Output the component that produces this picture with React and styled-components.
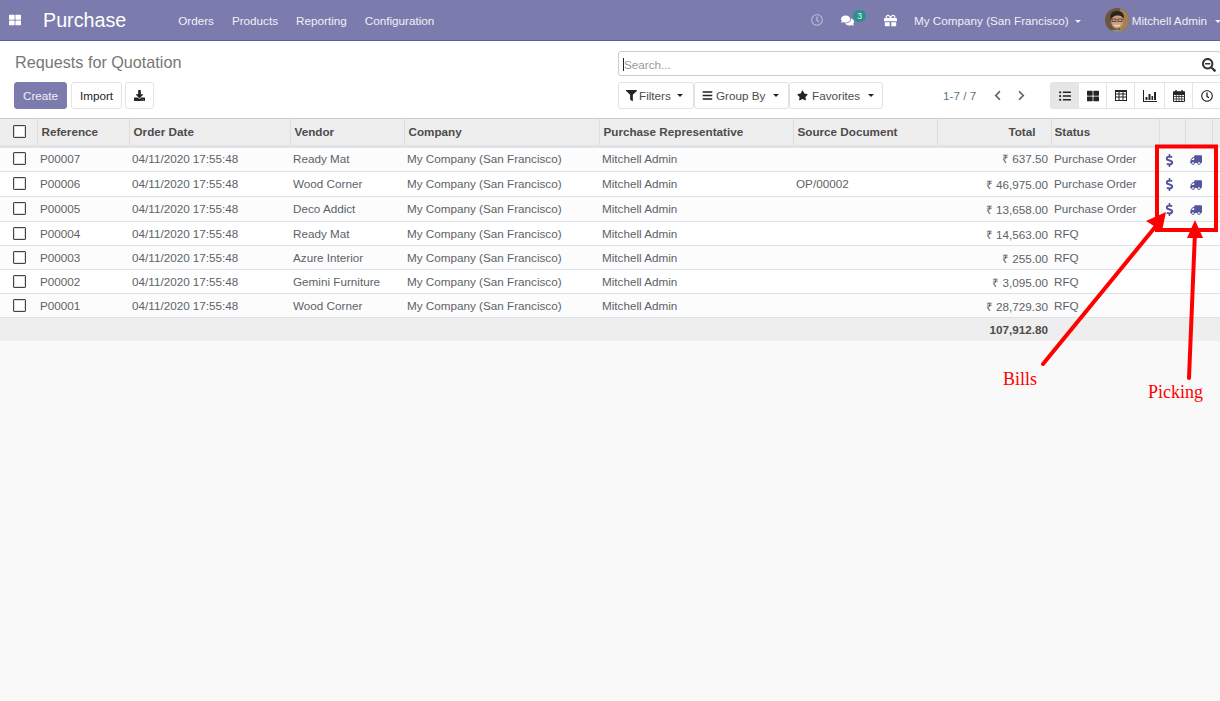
import React from "react";
import styled, { createGlobalStyle } from "styled-components";
import {
  FaThLarge, FaRegClock, FaComments, FaGift, FaSearchMinus, FaFilter, FaBars, FaStar,
  FaChevronLeft, FaChevronRight, FaListUl, FaDollarSign, FaTruck, FaDownload,
} from "react-icons/fa";

const Global = createGlobalStyle`
  html, body { margin: 0; height: 100%; }
  body { background: #f9f9f9; font-family: "Liberation Sans", Arial, sans-serif; font-size: 11.7px; color: #4c4c4c; }
  * { box-sizing: border-box; }
  #root { height: 100%; }
`;

const Page = styled.div`position: relative; width: 1220px; height: 701px; overflow: hidden;`;

const Navbar = styled.header`
  display: flex; align-items: center; height: 41px; background: #7c7bad; border-bottom: 1px solid #5f5e97;
  color: #fff; padding: 0 0 0 9px;
`;
const Brand = styled.span`font-size: 19.7px; margin-left: 22px; margin-right: 52px; color: #fff; position: relative; top: 0.5px;`;
const Menu = styled.nav`display: flex; gap: 18px;`;
const MenuItem = styled.span`color: #f0f0f6; font-size: 11.7px;`;
const NavRight = styled.div`margin-left: auto; margin-right: -1px; display: flex; align-items: center; flex-shrink: 0;`;
const NavIcon = styled.span`display: inline-flex; position: relative; color: ${p => p.$dim ? "#b9b8d3" : "#fff"}; margin-right: ${p => p.$mr}px; font-size: ${p => p.$size || 13}px;`;
const Badge = styled.span`
  position: absolute; left: 12px; top: -4px; width: 13px; height: 12px; border-radius: 6px; background: #2b9088;
  color: #e8f4f3; font-size: 8.5px; line-height: 12px; text-align: center;
`;
const NavText = styled.span`color: #f0f0f6; font-size: 11.7px; white-space: nowrap;`;
const Caret = styled.span`
  display: inline-block; width: 0; height: 0; border-left: 3.5px solid transparent; border-right: 3.5px solid transparent;
  border-top: 3.5px solid ${p => p.$color || "#f0f0f6"}; margin-left: ${p => p.$ml || 7}px; vertical-align: ${p => p.$va || 2}px;
`;
const Avatar = styled.svg`width: 24px; height: 24px; border-radius: 50%; margin-left: 24px; margin-right: 3px; display: block;`;

const Panel = styled.section`
  height: 78px; background: #fff; border-bottom: 1px solid #ccc; display: grid;
  grid-template-columns: 618px 1fr; padding: 9px 0 0 14px;
`;
const PanelLeft = styled.div`display: flex; flex-direction: column;`;
const Title = styled.h1`margin: 3px 0 0 1px; font-size: 16.2px; font-weight: 400; color: #777; line-height: 18px;`;
const LeftButtons = styled.div`display: flex; margin-top: 11px;`;
const Btn = styled.button`
  height: 27px; width: ${p => p.$w}px; margin-right: ${p => p.$mr || 0}px; padding: 0; border-radius: 3px; font: inherit; font-size: 11.7px;
  border: 1px solid ${p => p.$primary ? "#7c7bad" : "#e4e4e4"};
  background: ${p => p.$primary ? "#7c7bad" : "#fff"}; color: ${p => p.$primary ? "#f0f0f6" : "#212529"};
  display: inline-flex; align-items: center; justify-content: center; white-space: nowrap;
`;
const PanelRight = styled.div`display: flex; flex-direction: column; margin-left: -14px;`;
const SearchBox = styled.div`
  height: 25px; margin-top: 1px; border: 1px solid #ccc; border-radius: 3px; display: flex; align-items: center;
  padding: 2px 4px 0 4px; color: #999;
`;
const Cursor = styled.span`width: 1px; height: 13px; background: #222;`;
const SearchIcon = styled.span`margin-left: auto; color: #333; display: inline-flex; font-size: 14px;`;
const Controls = styled.div`display: flex; align-items: center; margin-top: 6px;`;
const FilterBtn = styled(Btn)`
  padding: 0 0 0 7px; color: #4c4c4c; justify-content: flex-start; gap: ${p => p.$gap}px; border-color: #e2e2e2;
  svg { color: #212529; font-size: 11px; }
`;
const Pager = styled.span`margin-left: 60px; color: #5f7480; width: 34px; white-space: nowrap;`;
const PagerBtn = styled.span`display: inline-flex; color: #666; font-size: 11px; margin-left: ${p => p.$ml}px;`;
const Views = styled.div`display: flex; margin-left: 23px;`;
const ViewBtn = styled.span`
  width: ${p => p.$w}px; height: 27px; display: flex; align-items: center; justify-content: center; font-size: 12px; color: #212529;
  border: 1px solid #e4e4e4; margin-left: -1px; background: ${p => p.$active ? "#e6e6e6" : "#fff"};
  &:first-child { border-radius: 3px 0 0 3px; margin-left: 0; }
`;

const Table = styled.table`
  width: 1220px; border-collapse: collapse; table-layout: fixed; background: #fff;
  tbody tr:first-child td:not(.icon) { padding-bottom: 2px; }
`;
const Head = styled.th`
  height: 27px; padding: 0 3px 0 ${p => p.$pl || 4}px; background: #eee; border-right: 1px solid #ddd; border-bottom: 3px solid #e0e3e6;
  font-size: 11.7px; font-weight: 700; color: #4c4c4c; text-align: ${p => p.$right ? "right" : "left"};
  padding-right: ${p => p.$right ? "15px" : "3px"};
  &:last-child { border-right: 0; }
`;
const Row = styled.tr`height: ${p => p.$h}px; background: ${p => p.$odd ? "#fcfcfc" : "#fff"}; border-bottom: 1px solid #dee2e6;`;
const Cell = styled.td`
  padding: ${p => p.$low ? 1 : 0}px 3px 0; color: #5c6368; font-size: 11.7px; white-space: nowrap; text-align: ${p => p.$right ? "right" : "left"};
`;
const CheckCell = styled.td`padding: 0 0 0 13px;`;
const Check = styled.span`display: block; width: 13px; height: 13px; border: 1px solid #444; border-radius: 1px; background: #fff; box-shadow: inset 0 0 0 1px #ddd;`;
const IconCell = styled.td`
  padding: 2px 5px 0 0; text-align: center; color: #55559b; font-size: 12px; line-height: 0;
  svg { transform: ${p => p.$flip ? "scaleX(-1)" : "none"}; }
`;
const Foot = styled.tr`height: 24px; background: #eee;`;
const FootTotal = styled.td`padding: 1px 3px 0; text-align: right; font-weight: 700; color: #4c4c4c; font-size: 11.7px;`;

const Overlay = styled.svg`position: absolute; left: 0; top: 0; pointer-events: none;`;
const Note = styled.span`
  position: absolute; left: ${p => p.$x}px; top: ${p => p.$y}px; color: #f00; font-family: "Liberation Serif", serif; font-size: 18px; line-height: 20px;
`;

const TableIcon = () => (
  <svg width="12" height="11" viewBox="0 0 12 11" fill="none" stroke="#212529" strokeWidth="1">
    <rect x=".5" y=".5" width="11" height="10" />
    <path d="M0 1.5H12M.5 4H11.5M.5 7H11.5M4 1V10M8 1V10" />
  </svg>
);
const GraphIcon = () => (
  <svg width="14" height="12" viewBox="0 0 14 12" fill="#212529">
    <path d="M0 0H1V11H14V12H0Z" />
    <rect x="2.5" y="7" width="2" height="3" /><rect x="5.5" y="4" width="2" height="6" />
    <rect x="8.5" y="6" width="1.6" height="4" /><rect x="11" y="2" width="2" height="8" />
  </svg>
);
const CalendarIcon = () => (
  <svg width="12" height="12" viewBox="0 0 12 12" fill="none" stroke="#212529" strokeWidth="1">
    <path d="M.5 2H11.5V11.5H.5Z" fill="#fff" />
    <rect x=".5" y="2" width="11" height="2.4" fill="#212529" />
    <path d="M.5 6.5H11.5M.5 9H11.5M3.3 4V11.5M6 4V11.5M8.7 4V11.5" strokeWidth=".8" />
    <path d="M3 0V2.5M9 0V2.5" strokeWidth="1.4" />
  </svg>
);

const rows = [
  ["P00007", "Ready Mat", "", "₹ 637.50", "Purchase Order", 25],
  ["P00006", "Wood Corner", "OP/00002", "₹ 46,975.00", "Purchase Order", 25],
  ["P00005", "Deco Addict", "", "₹ 13,658.00", "Purchase Order", 25],
  ["P00004", "Ready Mat", "", "₹ 14,563.00", "RFQ", 24],
  ["P00003", "Azure Interior", "", "₹ 255.00", "RFQ", 24],
  ["P00002", "Gemini Furniture", "", "₹ 3,095.00", "RFQ", 24],
  ["P00001", "Wood Corner", "", "₹ 28,729.30", "RFQ", 24],
];
const widths = [37, 92, 161, 114, 195, 194, 144, 114, 108, 26, 27, 8];

export default function App() {
  return (
    <Page>
      <Global />
      <Navbar>
        <NavIcon $size={12} $mr={0}><FaThLarge /></NavIcon>
        <Brand>Purchase</Brand>
        <Menu>
          <MenuItem>Orders</MenuItem>
          <MenuItem>Products</MenuItem>
          <MenuItem>Reporting</MenuItem>
          <MenuItem>Configuration</MenuItem>
        </Menu>
        <NavRight>
          <NavIcon $dim $mr={18} $size={12}><FaRegClock /></NavIcon>
          <NavIcon $mr={30} $size={13}><FaComments /><Badge>3</Badge></NavIcon>
          <NavIcon $mr={17} $size={13}><FaGift /></NavIcon>
          <NavText>My Company (San Francisco)<Caret $ml={6} /></NavText>
          <Avatar viewBox="0 0 24 24">
            <rect width="24" height="24" fill="#6d543c" />
            <rect x="15" width="9" height="24" fill="#a5814f" />
            <ellipse cx="12" cy="13" rx="6" ry="7.5" fill="#cf9f82" />
            <path d="M5.5 12 Q4 3 12 3 Q20 3 18.5 11 Q17 7 12 7.5 Q8 7.5 5.5 12 Z" fill="#2a2420" />
            <rect x="7" y="11" width="4" height="2.4" fill="none" stroke="#2a2420" strokeWidth=".7" />
            <rect x="13" y="11" width="4" height="2.4" fill="none" stroke="#2a2420" strokeWidth=".7" />
            <path d="M9 17 Q12 19 15 17" fill="none" stroke="#f3e6dc" strokeWidth="1" />
            <path d="M3 24 Q12 19 21 24 Z" fill="#8b948c" />
          </Avatar>
          <NavText>Mitchell Admin<Caret $ml={8} /></NavText>
        </NavRight>
      </Navbar>

      <Panel>
        <PanelLeft>
          <Title>Requests for Quotation</Title>
          <LeftButtons>
            <Btn $primary $w={53} $mr={4}>Create</Btn>
            <Btn $w={51} $mr={3}>Import</Btn>
            <Btn $w={29}><FaDownload size={11} /></Btn>
          </LeftButtons>
        </PanelLeft>
        <PanelRight>
          <SearchBox>
            <Cursor />Search...
            <SearchIcon><FaSearchMinus /></SearchIcon>
          </SearchBox>
          <Controls>
            <FilterBtn $w={76} $gap={2}><FaFilter />Filters<Caret $ml={4} $color="#212529" $va={3} /></FilterBtn>
            <FilterBtn $w={95} $gap={3}><FaBars />Group By<Caret $ml={5} $color="#212529" $va={3} /></FilterBtn>
            <FilterBtn $w={94} $gap={4}><FaStar />Favorites<Caret $ml={4} $color="#212529" $va={3} /></FilterBtn>
            <Pager>1-7 / 7</Pager>
            <PagerBtn $ml={15}><FaChevronLeft /></PagerBtn>
            <PagerBtn $ml={13}><FaChevronRight /></PagerBtn>
            <Views>
              <ViewBtn $w={29} $active><FaListUl /></ViewBtn>
              <ViewBtn $w={29}><FaThLarge /></ViewBtn>
              <ViewBtn $w={29}><TableIcon /></ViewBtn>
              <ViewBtn $w={31}><GraphIcon /></ViewBtn>
              <ViewBtn $w={29}><CalendarIcon /></ViewBtn>
              <ViewBtn $w={29}><FaRegClock /></ViewBtn>
            </Views>
          </Controls>
        </PanelRight>
      </Panel>

      <Table>
        <colgroup>{widths.map((w, i) => <col key={i} style={{ width: w }} />)}</colgroup>
        <thead>
          <tr>
            <Head $pl={13}><Check /></Head>
            <Head>Reference</Head>
            <Head>Order Date</Head>
            <Head>Vendor</Head>
            <Head>Company</Head>
            <Head>Purchase Representative</Head>
            <Head>Source Document</Head>
            <Head $right>Total</Head>
            <Head $pl={3}>Status</Head>
            <Head /><Head /><Head />
          </tr>
        </thead>
        <tbody>
          {rows.map((r, i) => {
            const low = i > 2;
            return (
              <Row key={r[0]} $h={r[5]} $odd={i % 2 === 0}>
                <CheckCell><Check /></CheckCell>
                <Cell $low={low}>{r[0]}</Cell>
                <Cell $low={low}>04/11/2020 17:55:48</Cell>
                <Cell $low={low}>{r[1]}</Cell>
                <Cell $low={low}>My Company (San Francisco)</Cell>
                <Cell $low={low}>Mitchell Admin</Cell>
                <Cell $low={low}>{r[2]}</Cell>
                <Cell $low={low} $right>{r[3]}</Cell>
                <Cell $low={low}>{r[4]}</Cell>
                <IconCell className="icon">{i < 3 && <FaDollarSign size={13} />}</IconCell>
                <IconCell className="icon" $flip>{i < 3 && <FaTruck size={12} />}</IconCell>
                <Cell />
              </Row>
            );
          })}
          <Foot>
            <td colSpan={7} />
            <FootTotal>107,912.80</FootTotal>
            <td colSpan={4} />
          </Foot>
        </tbody>
      </Table>

      <Overlay width="1220" height="701" viewBox="0 0 1220 701">
        <rect x="1157" y="146.5" width="59" height="83.5" fill="none" stroke="#f00" strokeWidth="4" />
        <path d="M1043 364 L1156 226" stroke="#f00" strokeWidth="4" strokeLinecap="round" />
        <polygon points="1166,212 1146,221 1162,231" fill="#f00" />
        <path d="M1189 378 L1195 232" stroke="#f00" strokeWidth="4" strokeLinecap="round" />
        <polygon points="1195,220 1187,238 1203,238" fill="#f00" />
      </Overlay>
      <Note $x={1003} $y={369}>Bills</Note>
      <Note $x={1148} $y={382}>Picking</Note>
    </Page>
  );
}
